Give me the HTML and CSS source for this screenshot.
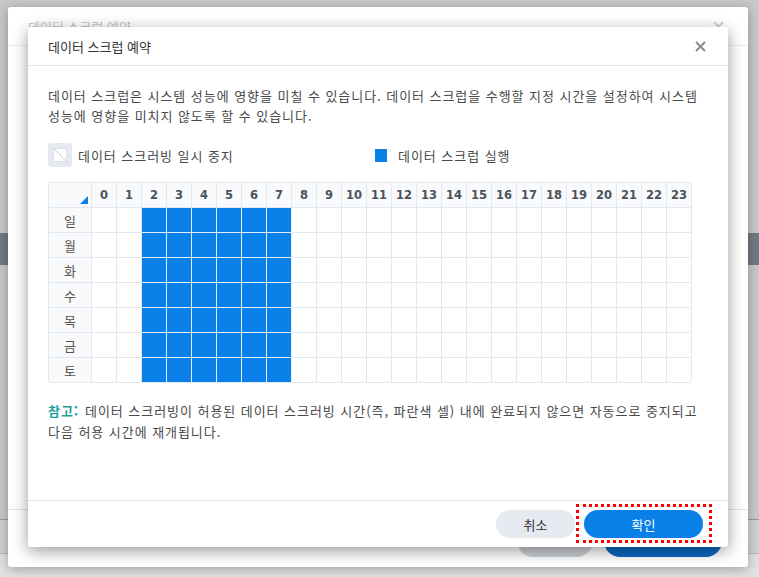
FILE: index.html
```html
<!DOCTYPE html>
<html lang="ko">
<head>
    <meta charset="UTF-8">
    <meta name="viewport" content="width=device-width, initial-scale=1.0">
    <title>데이터 스크럽 예약</title>
    <link rel="stylesheet" href="styles.css">
</head>
<body>

<div class="page">
    <div class="page-top"></div>
    <div class="page-bar"></div>
    <div class="page-mid"></div>
    <div class="page-band"></div>
    <div class="page-bottom"></div>
</div>

<div class="back-dialog">
    <div class="back-header">
        <span>데이터 스크럽 예약</span>
        <svg class="back-close" width="11" height="11" viewBox="0 0 11 11"><path d="M1 1L10 10M10 1L1 10" stroke="#d0d0d0" stroke-width="2"/></svg>
    </div>
    <div class="back-body"></div>
    <div class="back-footer">
        <span class="back-btn back-btn-gray"></span>
        <span class="back-btn back-btn-blue"></span>
    </div>
</div>

<div class="dialog">
    <div class="dialog-header">
        <span class="dialog-title">데이터 스크럽 예약</span>
        <svg class="close" width="11" height="11" viewBox="0 0 11 11"><path d="M1 1L10 10M10 1L1 10" stroke="#8a8a8a" stroke-width="2"/></svg>
    </div>
    <div class="dialog-body">
        <p class="desc">데이터 스크럽은 시스템 성능에 영향을 미칠 수 있습니다. 데이터 스크럽을 수행할 지정 시간을 설정하여 시스템 성능에 영향을 미치지 않도록 할 수 있습니다.</p>

        <div class="legend">
            <div class="legend-item legend-pause">
                <span class="pause-icon">
                    <svg width="14" height="14" viewBox="0 0 14 14"><rect x="0.5" y="0.5" width="13" height="13" fill="#fff" stroke="#dde2e8"/><path d="M1 1L13 13" stroke="#c9ced5" stroke-width="1"/></svg>
                </span>
                <span>데이터 스크러빙 일시 중지</span>
            </div>
            <div class="legend-item">
                <span class="run-icon"></span>
                <span>데이터 스크럽 실행</span>
            </div>
        </div>

        <div class="schedule" id="schedule"></div>

        <p class="note"><b>참고:</b>데이터 스크러빙이 허용된 데이터 스크러빙 시간(즉, 파란색 셀) 내에 완료되지 않으면 자동으로 중지되고 다음 허용 시간에 재개됩니다.</p>
    </div>
    <div class="dialog-footer">
        <button class="btn btn-cancel">취소</button>
        <span class="ok-frame"><button class="btn btn-ok">확인</button></span>
    </div>
</div>

<script>
    const days = ["일", "월", "화", "수", "목", "금", "토"];
    const grid = document.getElementById("schedule");
    let html = '<div class="cell head corner"><span class="corner-mark"></span></div>';
    for (let h = 0; h < 24; h++) {
        html += `<div class="cell head">${h}</div>`;
    }
    days.forEach(function (d) {
        html += `<div class="cell day">${d}</div>`;
        for (let h = 0; h < 24; h++) {
            let on = h >= 2 && h <= 7 ? " on" : "";
            html += `<div class="cell slot${on}"></div>`;
        }
    });
    grid.innerHTML = html;
</script>

</body>
</html>
```

FILE: styles.css
```css
body {
    margin: 0;
    width: 759px;
    height: 577px;
    overflow: hidden;
    position: relative;
    background-color: #c9c9c9;
    font-family: "Noto Sans CJK KR", "Noto Sans", sans-serif;
}

/* page behind the dialogs */
.page {
    height: 577px;
    display: flex;
    flex-direction: column;
}
.page-top {
    height: 233px;
}
.page-bar {
    height: 32px;
    background-color: #737b82;
}
.page-mid {
    height: 254px;
}
.page-band {
    height: 33px;
    background-color: #cfd2d5;
    border-top: 1px solid #9c9c9c;
    border-bottom: 1px solid #b9b9b9;
}
.page-bottom {
    flex: 1;
    background-color: #e2e2e2;
}

/* dialog underneath */
.back-dialog {
    position: absolute;
    left: 8px;
    top: 7px;
    width: 740px;
    height: 560px;
    background-color: #ffffff;
    border-radius: 3px;
    box-shadow: 0 2px 12px rgba(0, 0, 0, 0.3);
    display: flex;
    flex-direction: column;
}
.back-header {
    height: 38px;
    border-bottom: 1px solid #ececec;
    display: flex;
    align-items: center;
    justify-content: space-between;
    padding: 0 24px 0 20px;
    font-size: 13px;
    color: #c4c4c4;
}
.back-body {
    flex: 1;
}
.back-footer {
    height: 47px;
    border-top: 1px solid #e3e3e3;
    display: flex;
    justify-content: flex-end;
    align-items: flex-end;
    gap: 11px;
    padding: 0 26px 10px 0;
}
.back-btn {
    height: 32px;
    border-radius: 16px;
}
.back-btn-gray {
    width: 76px;
    background-color: #cdd2d8;
}
.back-btn-blue {
    width: 118px;
    background-color: #0b68c2;
}

/* active dialog */
.dialog {
    position: absolute;
    left: 28px;
    top: 27px;
    width: 700px;
    height: 520px;
    background-color: #ffffff;
    border-radius: 3px;
    box-shadow: 0 4px 16px rgba(0, 0, 0, 0.4);
    display: flex;
    flex-direction: column;
}
.dialog-header {
    height: 38px;
    border-bottom: 1px solid #dfe6ed;
    display: flex;
    align-items: center;
    justify-content: space-between;
    padding: 0 22px 0 20px;
}
.dialog-title {
    font-size: 13px;
    color: #333;
}
.dialog-body {
    flex: 1;
    padding: 20px 20px 0 20px;
    color: #4a4a4a;
    font-size: 13px;
    letter-spacing: 0.95px;
}
.desc {
    margin: 0;
    line-height: 20px;
}

.legend {
    display: flex;
    margin-top: 17px;
    height: 24px;
}
.legend-item {
    display: flex;
    align-items: center;
}
.legend-pause {
    width: 327px;
}
.pause-icon {
    width: 24px;
    height: 24px;
    border-radius: 3px;
    background-color: #e6eaf0;
    display: flex;
    align-items: center;
    justify-content: center;
    margin-right: 6px;
}
.run-icon {
    width: 12px;
    height: 13px;
    background-color: #0880e8;
    margin-right: 11px;
}

.schedule {
    margin-top: 15px;
    width: 644px;
    box-sizing: border-box;
    border: 1px solid #e3e8ee;
    border-radius: 3px;
    overflow: hidden;
    display: grid;
    grid-template-columns: 43px repeat(23, 25px) 24px;
    grid-template-rows: repeat(7, 25px) 24px;
    letter-spacing: 0;
}
.cell {
    box-sizing: border-box;
    border-right: 1px solid #e3e8ee;
    border-bottom: 1px solid #e3e8ee;
    display: flex;
    align-items: center;
    justify-content: center;
}
.cell:nth-child(25n) {
    border-right: none;
}
.cell:nth-last-child(-n+25) {
    border-bottom: none;
}
.head {
    background-color: #f8fafc;
    font-family: "DejaVu Sans", sans-serif;
    font-weight: bold;
    font-size: 11.5px;
    color: #4c525a;
}
.corner {
    position: relative;
}
.corner-mark {
    position: absolute;
    right: 3px;
    bottom: 3px;
    width: 0;
    height: 0;
    border-left: 8px solid transparent;
    border-bottom: 8px solid #0880e8;
}
.day {
    background-color: #f9fafc;
    color: #555;
}
.slot.on {
    background-color: #0880e8;
    border-color: #e6eef6;
}

.note {
    margin: 17px 0 0 0;
    line-height: 21px;
}
.note b {
    display: inline-block;
    margin-right: 6px;
    color: #1c9f9c;
}

.dialog-footer {
    height: 47px;
    border-top: 1px solid #e5e5e5;
    display: flex;
    justify-content: flex-end;
    align-items: flex-start;
    gap: 1px;
    padding: 3px 16px 0 0;
    box-sizing: border-box;
}
.btn {
    height: 28px;
    border: none;
    border-radius: 14px;
    font-family: "Noto Sans CJK KR", sans-serif;
    font-size: 13px;
    cursor: pointer;
}
.btn-cancel {
    width: 79px;
    margin-top: 6px;
    background-color: #e5eaf1;
    color: #333;
}
.ok-frame {
    display: flex;
    border: 3px dotted #ff0000;
    padding: 3px 6px 2px 5px;
}
.btn-ok {
    width: 119px;
    background-color: #0880e8;
    color: #ffffff;
}
```
